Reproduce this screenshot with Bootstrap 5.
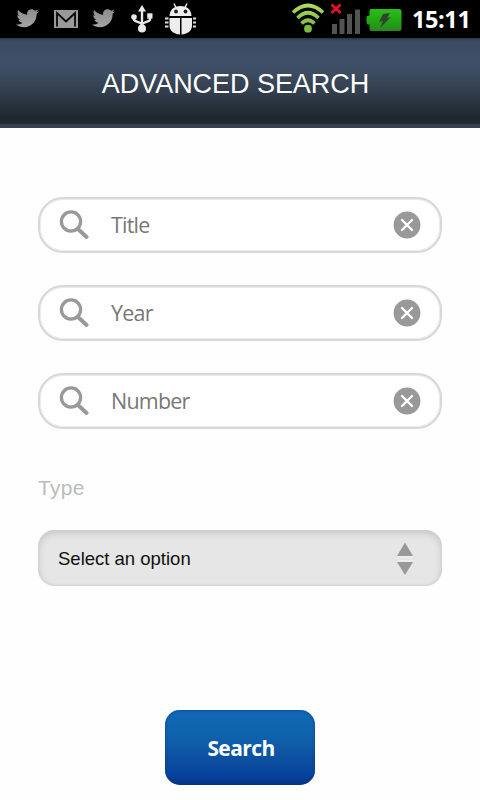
<!DOCTYPE html>
<html lang="en">
<head>
<meta charset="utf-8">
<meta name="viewport" content="width=device-width, initial-scale=1">
<title>Advanced Search</title>
<link href="https://cdn.jsdelivr.net/npm/bootstrap@5.3.0/dist/css/bootstrap.min.css" rel="stylesheet">
<style>
body{background:#fefefe;font-family:"Noto Sans","Open Sans",sans-serif;height:800px;overflow:hidden}
.status-bar{height:38px;background:#000}
.status-bar svg{display:block;flex:none}
.clock{font:700 23.500px/38px "Open Sans",sans-serif;color:#fff;white-space:nowrap;width:58px;margin-left:10px;letter-spacing:-.4px}
.title-bar{height:90px;padding:2px 9px 0 0;background:linear-gradient(#29384a 0,#394a62 3px,#40516a 24px,#3c4b60 36px,#303b48 58px,#1e272e 80px,#20292f 85px,#38424f 87px,#38424f 100%)}
.title-bar h1{font:400 27px/1 "Liberation Sans",Arial,sans-serif;color:#fff;white-space:nowrap;letter-spacing:-.05px}
.search-form{padding:69px 38px 0}
.field{height:56px;border:2px solid #d8d8d8;box-shadow:inset 0 0 0 1px #ebebeb;border-radius:25px;background:#fff;padding:0 19px;margin-bottom:32px}
.field input{font:400 21.500px/1.5 "Open Sans","Noto Sans",sans-serif;color:#777;height:46px;margin:-2px 0 0 22px;min-width:0;letter-spacing:-.8px}
.field input::placeholder{color:#777;opacity:1}
.field svg{flex:none}
.type-label{font:400 21px/24px "Liberation Sans",Arial,sans-serif;color:#bbb;margin-top:15px;letter-spacing:.3px}
.picker{height:56px;border-radius:17px;background:#e6e6e6;box-shadow:inset 0 0 2px 1px #d2d2d2,inset 0 3px 7px #c4c4c4;margin-top:30px;padding:0 28px 0 20px;font:400 18.500px/1 "Liberation Sans",Arial,sans-serif;color:#111}
.picker span{padding-top:2px}
.btn-search{width:150px;height:75px;margin-top:124px;padding:1px 0 0 2px;border:0;border-radius:15px;color:#fff;font:700 21px/1 "Open Sans",sans-serif;letter-spacing:-.6px;background:linear-gradient(#1068b4,#1064ae 30%,#0c50a0 65%,#07409a 90%,#032f82);box-shadow:inset 0 0 3px #063d85}
</style>
</head>
<body>
<header>
<div class="status-bar d-flex align-items-center">
<svg width="288" height="38" viewBox="0 0 288 38" aria-hidden="true">
<defs>
<linearGradient id="gray" x2="0" y2="1"><stop stop-color="#8d8d8d"/><stop offset="1" stop-color="#a5a5a5"/></linearGradient>
<path id="bird" d="M16 23.500c3 .2 5-.4 6.500-1.700-2-.2-3.500-1.300-4-3l2-.1c-2-.8-3.300-2.200-3.300-4.500l2 .5c-1.700-1.500-2.200-3.500-1-5.700 2.500 2.800 5.300 4.500 9 4.800-.5-3.500 1.600-5.600 4.300-5.600 1.600 0 2.800.6 3.600 1.500l3.200-1.200-1.800 2.500 2.700-.6-2.500 2.400c.1 7.300-5.200 13.400-12.500 13.400-3 0-5.900-.9-8.200-2.700z" transform="translate(0 1)"/>
</defs>
<use href="#bird" fill="url(#gray)"/><use href="#bird" x="76" fill="url(#gray)"/>
<rect x="54" y="10" width="24" height="18" fill="#999"/>
<path d="M57 26.500V13l9 8.500 9-8.500v13.500" fill="none" stroke="#080808" stroke-width="1.800"/>
<g fill="none" stroke="#e8e8e8" stroke-width="2.400"><path d="M142 28V9M134 17v2.500c0 2.500 8 2.200 8 5.500M150 17v2.500c0 2.500-8 2.200-8 5.500"/></g>
<g fill="#e8e8e8"><path d="m142 5 4 6.500h-8z"/><circle cx="134" cy="17" r="2.800"/><path d="M147.200 13.300h5.300v5.300h-5.300z"/><circle cx="142" cy="28.500" r="4"/></g>
<g fill="#ededed"><path d="M169.500 16c.3-6.500 4.500-10 11-10s10.700 3.500 11 10z"/><path d="M169.500 18H180v16.500c-6.500-.5-10.500-4-10.500-9zM181.500 18H192v7.500c0 5-4 8.500-10.500 9z"/></g>
<path d="m174 3.500 2 4m11-4-2 4" stroke="#ededed" stroke-width="1.500"/>
<g fill="#222"><circle cx="176" cy="11.500" r="1.900"/><circle cx="185.500" cy="11.500" r="1.900"/></g>
<path d="M165 18.500h3.500m-3.500 4h3.500m-3.500 4h3.500m24.500-8h3m-3 4h3m-3 4h3" stroke="#ddd" stroke-width="2"/>
</svg>
<svg width="114" height="38" viewBox="288 0 114 38" aria-hidden="true">
<defs><linearGradient id="wifi" x1="0" y1="4" x2="0" y2="33" gradientUnits="userSpaceOnUse"><stop stop-color="#b3da60"/><stop offset="1" stop-color="#68b32f"/></linearGradient><linearGradient id="power" x2="0" y2="1"><stop stop-color="#2dbd20"/><stop offset=".5" stop-color="#20a911"/><stop offset="1" stop-color="#2b861f"/></linearGradient></defs>
<g fill="none" stroke="url(#wifi)" stroke-width="3.600"><path d="M293 12.500Q308-1.500 323 12.500M297.500 18Q308 7.500 318.500 18M301.500 23.500Q308 17 314.500 23.500"/></g><circle cx="308" cy="28.700" r="3.900" fill="#79bb43"/>
<path d="M332 24h5v10h-5zM339.500 19h5v15h-5zM347 14h5v20h-5zM355 9.500h5V34h-5z" fill="#535353"/>
<path d="m331.500 4.500 9 8.500m0-8.500-9 8.500" stroke="#dc1522" stroke-width="3"/>
<path d="M371 9h28q2.500 0 2.500 2.500v17q0 2.500-2.500 2.500h-28q-1.500 0-1.500-2v-4.500q-3 0-3-2v-5q0-2 3-2V11q0-2 1.500-2z" fill="url(#power)"/>
<path d="m383 14 7-1-3 5 4-1-11 11 3-7-4 1z" fill="#304330"/>
</svg>
<div class="clock">15:11</div>
</div>
<div class="title-bar d-flex align-items-center justify-content-center"><h1 class="m-0">ADVANCED SEARCH</h1></div>
</header>
<svg width="0" height="0" class="d-none" aria-hidden="true">
<symbol id="lens" viewBox="0 0 30 30"><circle cx="12" cy="11.500" r="9.600" fill="none" stroke="#999" stroke-width="3.300"/><path d="m19 19 8.500 8" stroke="#999" stroke-width="4" stroke-linecap="round"/></symbol>
<symbol id="clear" viewBox="0 0 28 28"><circle cx="14" cy="14" r="13.400" fill="#999"/><path d="m9 9 10 10m0-10L9 19" stroke="#fff" stroke-width="2.400" stroke-linecap="round"/></symbol>
</svg>
<form class="search-form d-flex flex-column">
<div class="field d-flex align-items-center"><svg width="30" height="30"><use href="#lens"/></svg><input class="form-control border-0 bg-transparent p-0 shadow-none" placeholder="Title" aria-label="Title"><svg class="me-0" width="28" height="28"><use href="#clear"/></svg></div>
<div class="field d-flex align-items-center"><svg width="30" height="30"><use href="#lens"/></svg><input class="form-control border-0 bg-transparent p-0 shadow-none" placeholder="Year" aria-label="Year"><svg width="28" height="28"><use href="#clear"/></svg></div>
<div class="field d-flex align-items-center"><svg width="30" height="30"><use href="#lens"/></svg><input class="form-control border-0 bg-transparent p-0 shadow-none" placeholder="Number" aria-label="Number"><svg width="28" height="28"><use href="#clear"/></svg></div>
<div class="type-label">Type</div>
<div class="picker d-flex align-items-center justify-content-between" role="button"><span>Select an option</span><svg width="18" height="34" viewBox="0 0 18 34"><path d="M9 1.500 17 15H1zM1 21h16L9 34z" fill="#999"/><path d="M1 16h16M1 20h16" stroke="#f4f4f4"/></svg></div>
<button type="button" class="btn btn-search align-self-center">Search</button>
</form>
<script src="https://cdn.jsdelivr.net/npm/bootstrap@5.3.0/dist/js/bootstrap.bundle.min.js"></script>
</body>
</html>
